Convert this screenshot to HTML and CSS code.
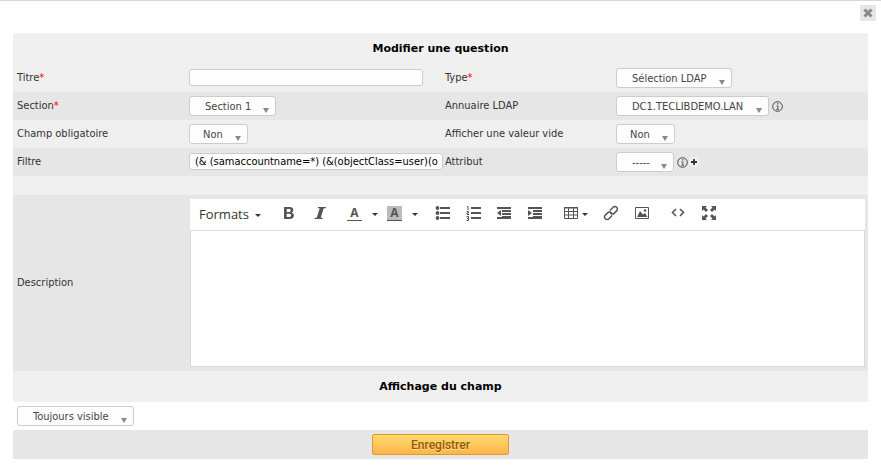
FILE: index.html
```html
<!DOCTYPE html>
<html lang="fr">
<head>
<meta charset="utf-8">
<title>Modifier une question</title>
<link rel="stylesheet" href="styles.css">
</head>
<body>
<div class="bar"><button class="close" type="button" aria-label="Fermer"><svg width="10" height="10" viewBox="0 0 10 10"><path d="M1.5 1.5l7 7M8.5 1.5l-7 7" stroke="#888" stroke-width="3"/></svg></button></div>
<form class="form">
  <h1 class="heading">Modifier une question</h1>
  <div class="row">
    <label for="titre">Titre<span class="req">*</span></label>
    <div class="field"><input id="titre" class="text" type="text"></div>
    <label for="type">Type<span class="req">*</span></label>
    <div class="field"><span class="select w-type"><select id="type"><option>Sélection LDAP</option></select></span></div>
  </div>
  <div class="row dark">
    <label for="section">Section<span class="req">*</span></label>
    <div class="field"><span class="select w-section"><select id="section"><option>Section 1</option></select></span></div>
    <label for="ldap">Annuaire LDAP</label>
    <div class="field"><span class="select w-ldap"><select id="ldap"><option>DC1.TECLIBDEMO.LAN</option></select></span>
      <svg class="info" viewBox="0 0 11 11"><circle cx="5.5" cy="5.5" r="4.8" fill="none" stroke="#444"/><path d="M5 2h1.500v1.500H5zM4 4.500h2.500v3.500H7v1H4V8h1V5.300H4z" fill="#777"/></svg></div>
  </div>
  <div class="row">
    <label for="oblig">Champ obligatoire</label>
    <div class="field"><span class="select short w-non"><select id="oblig"><option>Non</option></select></span></div>
    <label for="vide">Afficher une valeur vide</label>
    <div class="field"><span class="select short w-non"><select id="vide"><option>Non</option></select></span></div>
  </div>
  <div class="row dark">
    <label for="filtre">Filtre</label>
    <div class="field"><input id="filtre" class="text wide" type="text" value="(&amp; (samaccountname=*) (&amp;(objectClass=user)(objectCategory=person)))"></div>
    <label for="attribut">Attribut</label>
    <div class="field"><span class="select w-attr"><select id="attribut"><option>-----</option></select></span>
      <svg class="info" viewBox="0 0 11 11"><circle cx="5.5" cy="5.5" r="4.8" fill="none" stroke="#444"/><path d="M5 2h1.500v1.500H5zM4 4.500h2.500v3.500H7v1H4V8h1V5.300H4z" fill="#777"/></svg>
      <button class="add" type="button" aria-label="Ajouter"><svg width="10" height="10" viewBox="0 0 10 10"><circle cx="5" cy="5" r="5" fill="#f0f0f0"/><path d="M5 2v6M2 5h6" stroke="#333" stroke-width="1.800"/></svg></button></div>
  </div>
  <div class="spacer"></div>
  <div class="row dark tall">
    <label for="description">Description</label>
    <div class="editor">
      <div class="toolbar">
        <button type="button" class="formats">Formats <i class="caret"></i></button>
        <button type="button" class="t-bold" aria-label="Gras"><svg width="16" height="16" viewBox="0 0 16 16"><path fill-rule="evenodd" d="M3 2h5.500c2.400 0 3.800 1 3.800 3.100 0 1.300-.7 2.200-1.700 2.600 1.400.3 2.300 1.300 2.300 2.800C12.900 12.800 11.300 14 8.800 14H3zm2.700 2v2.900h2.500c2 0 2-2.900 0-2.900zm0 4.800V12h2.700c2.300 0 2.300-3.200 0-3.200z"/></svg></button>
        <button type="button" class="t-italic" aria-label="Italique"><svg width="16" height="16" viewBox="0 0 16 16"><path d="M6 2h8l-.3 1.300h-2L8.700 12.700h2L10.400 14h-8l.3-1.300h2L7.700 3.300h-2z"/></svg></button>
        <button type="button" class="t-color">A</button>
        <button type="button" class="drop" aria-label="Couleurs du texte"><i class="caret"></i></button>
        <button type="button" class="t-color back">A</button>
        <button type="button" class="drop" aria-label="Couleurs de fond"><i class="caret"></i></button>
        <button type="button" class="t-ul" aria-label="Puces"><svg width="16" height="16" viewBox="0 0 16 16"><path d="M5 2h10v2H5zM5 7h10v2H5zM5 12h10v2H5z"/><circle cx="2.500" cy="3" r="1.900"/><circle cx="2.500" cy="8" r="1.900"/><circle cx="2.500" cy="13" r="1.900"/></svg></button>
        <button type="button" class="t-ol" aria-label="Numéros"><svg width="16" height="16" viewBox="0 0 16 16"><path d="M5 2h10v2H5zM5 7h10v2H5zM5 12h10v2H5z"/><path fill="none" stroke="#555" d="M1 1.500h1V5M.5 6.500h2v1.500h-1.500v1.500h2M.5 11.500h2v4h-2M1 13.500h1.500"/></svg></button>
        <button type="button" class="t-out" aria-label="Diminuer le retrait"><svg width="16" height="16" viewBox="0 0 16 16"><path d="M1 2h14v2H1zM6 5h9v2H6zM6 8h9v2H6zM6 11h9v1H6zM1 12h14v2H1zM5 5v6L1 8z"/></svg></button>
        <button type="button" class="t-in" aria-label="Augmenter le retrait"><svg width="16" height="16" viewBox="0 0 16 16"><path d="M1 2h14v2H1zM6 5h9v2H6zM6 8h9v2H6zM6 11h9v1H6zM1 12h14v2H1zM1 5v6l4-3z"/></svg></button>
        <button type="button" class="t-table" aria-label="Tableau"><svg width="16" height="16" viewBox="0 0 16 16"><path fill="none" stroke="#555" d="M1.500 2.500h13v11h-13zM1 6.500h14M1 10h14M5.500 2v12M10.500 2v12"/><path d="M1 2h14v1.500H1z"/></svg><i class="caret"></i></button>
        <button type="button" class="t-link" aria-label="Lien"><svg width="16" height="16" viewBox="0 0 16 16"><g fill="none" stroke="#555" stroke-width="1.500" transform="rotate(-45 8 8)"><path d="M7 10.500H2.500a2.500 2.500 0 010-5H6a2.500 2.500 0 012.300 3.500"/><path d="M9 5.500h4.500a2.500 2.500 0 010 5H10A2.500 2.500 0 017.700 7"/></g></svg></button>
        <button type="button" class="t-img" aria-label="Image"><svg width="16" height="16" viewBox="0 0 16 16"><path fill="none" stroke="#555" d="M1.500 2.500h13v11h-13z"/><path d="M3 12l3-6 3 3.500 2-1.500 2.500 4z"/><circle cx="11" cy="5.500" r="1.300"/></svg></button>
        <button type="button" class="t-code" aria-label="Code source"><svg width="16" height="16" viewBox="0 0 16 16"><path fill="none" stroke="#555" stroke-width="1.600" d="M6 4L2.500 7.500 6 11M10 4l3.500 3.500L10 11"/></svg></button>
        <button type="button" class="t-full" aria-label="Plein écran"><svg width="16" height="16" viewBox="0 0 16 16"><path d="M1 1h5L4.500 2.500 7 5 5 7 2.500 4.500 1 6zM15 1v5l-1.500-1.500L11 7 9 5l2.500-2.500L10 1zM1 15v-5l1.500 1.500L5 9l2 2-2.500 2.500L6 15zM15 15h-5l1.500-1.500L9 11l2-2 2.500 2.500L15 10z"/></svg></button>
      </div>
      <textarea id="description"></textarea>
    </div>
  </div>
  <h2 class="heading">Affichage du champ</h2>
  <div class="visible"><span class="select w-visible"><select aria-label="Affichage du champ"><option>Toujours visible</option></select></span></div>
  <div class="actions"><button class="save" type="submit">Enregistrer</button></div>
</form>
</body>
</html>
```
FILE: styles.css
```css
* { box-sizing: border-box; }
body {
  margin: 0;
  border-top: 1px solid #d8d8d8;
  background: #fff;
  color: #333;
  font: 11px/14px "DejaVu Sans Condensed", "DejaVu Sans", sans-serif;
}
button { margin: 0; padding: 0; border: 0; background: none; font: inherit; color: inherit; }
svg { display: block; fill: #555; }
.bar { display: flex; justify-content: flex-end; height: 32px; padding: 4px 5px 0 0; }
.close { display: flex; align-items: center; justify-content: center; width: 16px; height: 16px; background: #e6e6e6; }
.form { margin: 0 13px; }
.heading {
  margin: 0;
  padding: 9px 4px 8px;
  background: #f0f0f0;
  color: #000;
  font: bold 11px/14px "DejaVu Sans", sans-serif;
  text-align: center;
}
.row {
  display: grid;
  grid-template-columns: 172fr 256fr 171fr 256fr;
  align-items: center;
  height: 28px;
  background: #efefef;
}
.dark { background: #e6e6e6; }
.row > label { padding: 0 4px; }
.req { color: #f00; }
.field { display: flex; align-items: center; min-width: 0; padding-left: 4px; }
.text {
  flex: none;
  width: 234px;
  height: 17px;
  margin: 0 0 2px;
  padding: 0 5px;
  border: 1px solid #ccc;
  border-radius: 3px;
  background: #fdfdfd;
  color: #000;
  font: inherit;
}
.wide { width: 254px; padding-right: 4px; }
.select { position: relative; display: inline-block; flex: none; height: 20px; }
.select select {
  appearance: none;
  display: block;
  width: 100%;
  height: 100%;
  margin: 0;
  padding: 1px 0 0 15px;
  border: 1px solid #ccc;
  border-radius: 3px;
  background: #fdfdfd;
  color: #444;
  font: inherit;
}
.select::after {
  content: "";
  position: absolute;
  right: 7px;
  bottom: 3px;
  border: 3px solid transparent;
  border-top: 5px solid #888;
  border-bottom: 0;
}
.short select { padding-left: 13px; }
.w-type { width: 116px; }
.w-section { width: 87px; }
.w-ldap { width: 153px; }
.w-non { width: 59px; }
.w-attr { width: 58px; }
.w-visible { width: 117px; }
.info { width: 11px; height: 11px; margin-left: 3px; }
.add { margin-left: 1px; }
.spacer { height: 19px; background: #efefef; }
.tall { grid-template-columns: 172fr 683fr; height: auto; }
.editor { padding: 4px 3px 4px 5px; }
.toolbar { display: flex; align-items: center; height: 31px; padding: 0 0 3px 9px; background: #fff; }
.toolbar button { display: flex; align-items: center; flex: none; }
.caret { margin-top: 3px; border: 3px solid transparent; border-top-color: #333; border-bottom: 0; }
.toolbar .formats { gap: 6px; padding-top: 1px; font: 13px/18px "Open Sans", sans-serif; }
.t-bold { margin-left: 20px; }
.t-italic { margin-left: 15px; }
.toolbar .t-color {
  justify-content: center;
  width: 15px;
  height: 15px;
  margin-left: 19px;
  border-bottom: 1px solid #555;
  color: #555;
  font: bold 12px/14px "Open Sans", sans-serif;
}
.toolbar .back { margin-left: 9px; background: #bbb; }
.drop { margin-left: 10px; }
.t-ul { margin-left: 17px; }
.t-ol, .t-in { margin-left: 15px; }
.t-out { margin-left: 14px; }
.t-table { gap: 3px; margin-left: 20px; }
.t-link { margin-left: 15px; }
.t-img { margin-left: 15px; }
.t-code { margin-left: 20px; }
.t-full { margin-left: 15px; }
textarea {
  display: block;
  width: 100%;
  height: 137px;
  margin: 0;
  border: 1px solid #d9d9d9;
  background: #fff;
  resize: none;
}
.visible { height: 28px; padding: 4px; }
.actions { display: flex; justify-content: center; padding: 4px; background: #e6e6e6; }
.save {
  width: 137px;
  height: 21px;
  border: 1px solid #e09a2b;
  border-radius: 2px;
  background: linear-gradient(#fedb6f, #feb44a);
  color: #8f5a0a;
  font: 500 12px/14px Roboto, sans-serif;
  text-shadow: 0 1px 0 #fee08a;
}
```
